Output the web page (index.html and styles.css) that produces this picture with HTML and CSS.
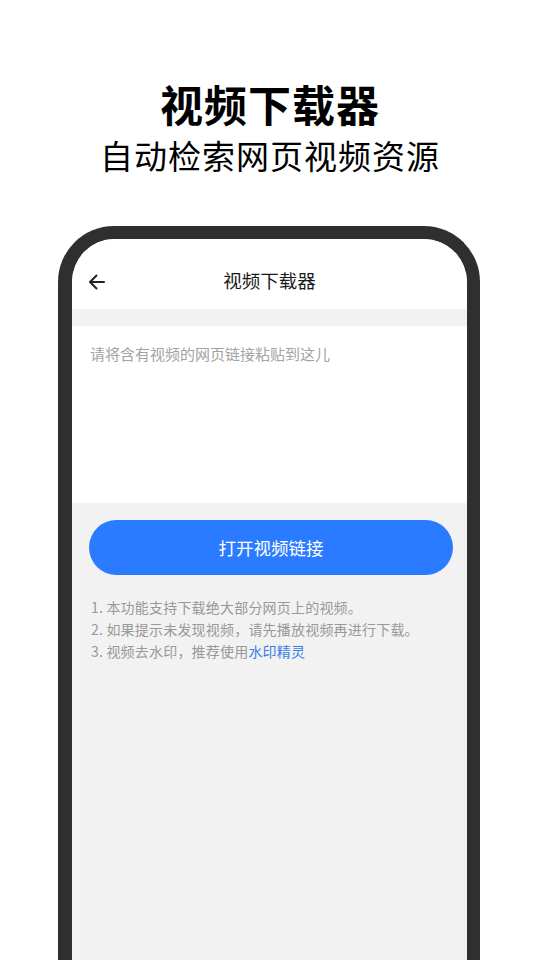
FILE: index.html
```html
<!DOCTYPE html>
<html lang="zh-CN">
<head>
    <meta charset="UTF-8">
    <meta name="viewport" content="width=device-width, initial-scale=1.0">
    <title>视频下载器</title>
    <link rel="stylesheet" href="styles.css">
</head>
<body>
    <div class="promo">
        <h1>视频下载器</h1>
        <p class="subtitle">自动检索网页视频资源</p>
    </div>

    <div class="phone">
        <div class="screen">
            <div class="app-bar">
                <span class="back-btn">
                    <svg width="20" height="20" viewBox="0 0 20 20">
                        <path d="M17 10H3.5M9.5 3.5L3 10l6.5 6.5" fill="none" stroke="#222" stroke-width="2" stroke-linecap="round" stroke-linejoin="round"/>
                    </svg>
                </span>
                <span class="app-title">视频下载器</span>
            </div>

            <div class="url-input">请将含有视频的网页链接粘贴到这儿</div>

            <button class="open-btn">打开视频链接</button>

            <div class="tips">
                <p>1. 本功能支持下载绝大部分网页上的视频。</p>
                <p>2. 如果提示未发现视频，请先播放视频再进行下载。</p>
                <p>3. 视频去水印，推荐使用<a href="#" class="tip-link">水印精灵</a></p>
            </div>
        </div>
    </div>
</body>
</html>
```

FILE: styles.css
```css
body {
    margin: 0;
    background: #fff;
    font-family: "Noto Sans CJK SC", "Noto Sans", sans-serif;
    height: 960px;
    overflow: hidden;
}

.promo {
    text-align: center;
    padding-top: 77px;
    color: #000;
}

.promo h1 {
    margin: 0;
    font-size: 43px;
    line-height: 52px;
    font-weight: 700;
    letter-spacing: 1px;
}

.subtitle {
    margin: 3px 0 0;
    font-size: 33px;
    line-height: 46px;
    letter-spacing: 1px;
}

.phone {
    width: 395px;
    margin: 48px 0 0 58px;
    border: 13px solid #2f2f2f;
    border-left-width: 14px;
    border-bottom: none;
    border-radius: 56px 56px 0 0;
    height: 760px;
    overflow: hidden;
}

.screen {
    background: #f2f2f2;
    height: 100%;
    border-radius: 44px 44px 0 0;
    overflow: hidden;
}

.app-bar {
    position: relative;
    height: 70px;
    background: #fff;
    display: flex;
    align-items: center;
    justify-content: center;
}

.back-btn {
    position: absolute;
    left: 15px;
    top: 33px;
    display: flex;
}

.app-title {
    font-size: 18.5px;
    color: #1a1a1a;
    margin-top: 12px;
}

.url-input {
    margin-top: 17px;
    height: 177px;
    background: #fff;
    box-sizing: border-box;
    padding: 17px 18px;
    font-size: 15px;
    color: #a3a3a3;
    line-height: 22px;
}

.open-btn {
    display: block;
    width: 364px;
    height: 55px;
    margin: 17px 0 0 17px;
    border: none;
    border-radius: 28px;
    background: #2a7bff;
    color: #fff;
    font-family: inherit;
    font-size: 17.5px;
}

.tips {
    margin: 21px 0 0 19px;
    font-size: 14px;
    letter-spacing: 0.2px;
    color: #999;
    line-height: 22px;
}

.tips p {
    margin: 0;
}

.tip-link {
    color: #3a7ce8;
    text-decoration: none;
}
```
